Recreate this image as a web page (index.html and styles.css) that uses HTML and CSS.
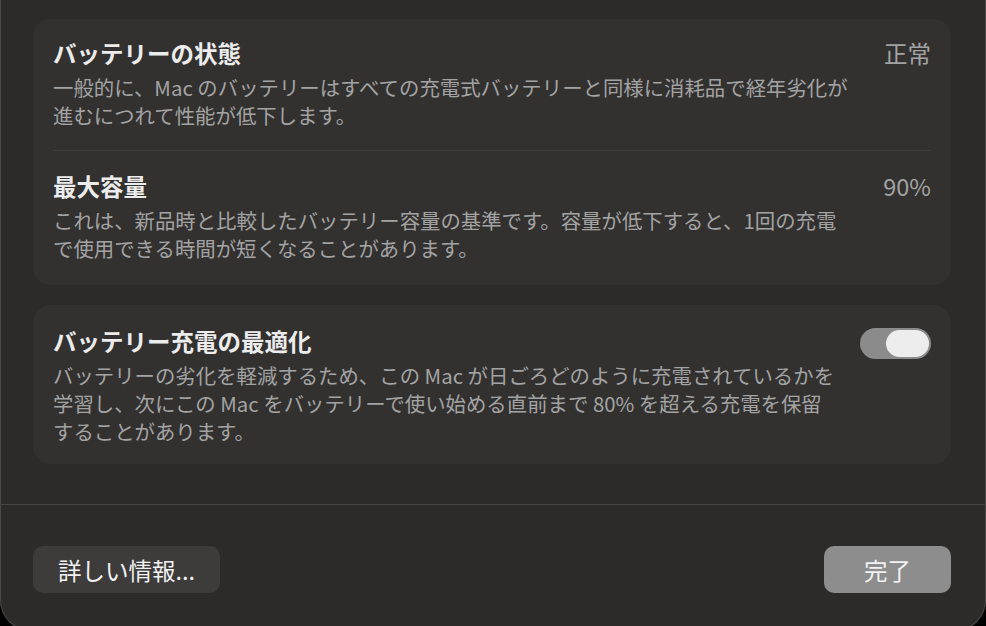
FILE: index.html
```html
<!DOCTYPE html>
<html lang="ja">
<head>
<meta charset="utf-8">
<link rel="stylesheet" href="styles.css">
</head>
<body>
<div class="window">
  <div class="content">
    <section class="card">
      <div class="row">
        <div class="text">
          <div class="title">バッテリーの状態</div>
          <div class="desc">一般的に、Mac のバッテリーはすべての充電式バッテリーと同様に消耗品で経年劣化が<br>進むにつれて性能が低下します。</div>
        </div>
        <div class="value">正常</div>
      </div>
      <div class="divider"></div>
      <div class="row row2">
        <div class="text">
          <div class="title">最大容量</div>
          <div class="desc">これは、新品時と比較したバッテリー容量の基準です。容量が低下すると、1回の充電<br>で使用できる時間が短くなることがあります。</div>
        </div>
        <div class="value">90%</div>
      </div>
    </section>
    <section class="card card2">
      <div class="row">
        <div class="text">
          <div class="title">バッテリー充電の最適化</div>
          <div class="desc">バッテリーの劣化を軽減するため、この Mac が日ごろどのように充電されているかを<br>学習し、次にこの Mac をバッテリーで使い始める直前まで 80% を超える充電を保留<br>することがあります。</div>
        </div>
        <div class="toggle"><div class="knob"></div></div>
      </div>
    </section>
  </div>
  <div class="footer">
    <button class="btn btn-info">詳しい情報...</button>
    <button class="btn btn-done">完了</button>
  </div>
</div>
</body>
</html>
```

FILE: styles.css
```css
html, body {
  margin: 0;
  padding: 0;
  background: #000;
  width: 986px;
  height: 626px;
  overflow: hidden;
}
body {
  font-family: "Noto Sans CJK JP", "Noto Sans", sans-serif;
}
.window {
  width: 986px;
  height: 671px;
  margin-top: -40px;
  box-sizing: border-box;
  background: #2c2b2a;
  border-radius: 31px;
  box-shadow: inset 0 0 0 1px #4a4948;
  display: flex;
  flex-direction: column;
}
.content {
  padding: 59px 35px 0 33px;
  display: flex;
  flex-direction: column;
  gap: 20px;
  flex: 0 0 auto;
  height: 545px;
  box-sizing: border-box;
  border-bottom: 1px solid #454443;
}
.card {
  background: #323130;
  border-radius: 17px;
  padding: 0 20px;
}
.row {
  display: flex;
  justify-content: space-between;
  align-items: flex-start;
  padding: 19px 0 21px;
}
.row2 {
  padding: 20px 0 23px;
}
.card2 .row {
  padding: 21px 0 19px;
}
.text {
  display: flex;
  flex-direction: column;
  gap: 5px;
}
.title {
  font-size: 23.5px;
  line-height: 30px;
  font-weight: 700;
  color: #ececec;
}
.desc {
  font-size: 20.4px;
  line-height: 28px;
  color: #a3a3a3;
  white-space: nowrap;
}
.value {
  font-size: 23.5px;
  line-height: 30px;
  color: #a3a3a3;
}
.divider {
  height: 1px;
  background: #3e3d3c;
}
.toggle {
  width: 71px;
  height: 31px;
  border-radius: 16px;
  background: #8b8b8b;
  box-sizing: border-box;
  padding: 2px 2px;
  display: flex;
  justify-content: flex-end;
  margin-top: 2px;
}
.knob {
  width: 43px;
  height: 27px;
  border-radius: 14px;
  background: #ededed;
}
.footer {
  display: flex;
  justify-content: space-between;
  padding: 41px 35px 0 33px;
}
.btn {
  font-family: "Noto Sans CJK JP", "Noto Sans", sans-serif;
  border: none;
  height: 47px;
  border-radius: 10px;
  font-size: 23.5px;
  color: #f2f2f2;
  padding: 0;
}
.btn-info {
  width: 187px;
  background: #3d3c3b;
}
.btn-done {
  width: 127px;
  background: #8d8d8d;
}
```
